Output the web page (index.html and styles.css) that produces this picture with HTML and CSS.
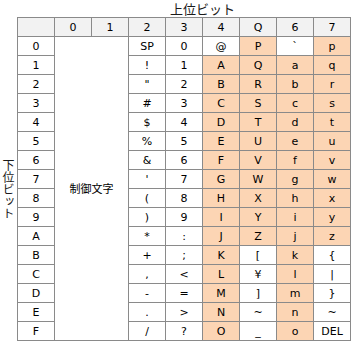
FILE: index.html
```html
<!DOCTYPE html>
<html lang="ja">
<head>
<meta charset="utf-8">
<title>文字コード表</title>
<link rel="stylesheet" href="styles.css">
</head>
<body>
<div class="page">
  <div class="corner"></div>
  <div class="top-label">上位ビット</div>
  <div class="side-label"><span class="vtext">下位ビット</span></div>
  <div class="grid">
    <div class="c hd"></div><div class="c hd">0</div><div class="c hd">1</div><div class="c hd">2</div><div class="c hd">3</div><div class="c hd">4</div><div class="c hd">Q</div><div class="c hd">6</div><div class="c hd">7</div>

    <div class="c">0</div><div class="c ctrl">制御文字</div><div class="c">SP</div><div class="c">0</div><div class="c">@</div><div class="c o">P</div><div class="c top">`</div><div class="c o">p</div>
    <div class="c">1</div><div class="c">!</div><div class="c">1</div><div class="c o">A</div><div class="c o">Q</div><div class="c o">a</div><div class="c o">q</div>
    <div class="c">2</div><div class="c">"</div><div class="c">2</div><div class="c o">B</div><div class="c o">R</div><div class="c o">b</div><div class="c o">r</div>
    <div class="c">3</div><div class="c">#</div><div class="c">3</div><div class="c o">C</div><div class="c o">S</div><div class="c o">c</div><div class="c o">s</div>
    <div class="c">4</div><div class="c">$</div><div class="c">4</div><div class="c o">D</div><div class="c o">T</div><div class="c o">d</div><div class="c o">t</div>
    <div class="c">5</div><div class="c">%</div><div class="c">5</div><div class="c o">E</div><div class="c o">U</div><div class="c o">e</div><div class="c o">u</div>
    <div class="c">6</div><div class="c">&amp;</div><div class="c">6</div><div class="c o">F</div><div class="c o">V</div><div class="c o">f</div><div class="c o">v</div>
    <div class="c">7</div><div class="c">'</div><div class="c">7</div><div class="c o">G</div><div class="c o">W</div><div class="c o">g</div><div class="c o">w</div>
    <div class="c">8</div><div class="c">(</div><div class="c">8</div><div class="c o">H</div><div class="c o">X</div><div class="c o">h</div><div class="c o">x</div>
    <div class="c">9</div><div class="c">)</div><div class="c">9</div><div class="c o">I</div><div class="c o">Y</div><div class="c o">i</div><div class="c o">y</div>
    <div class="c">A</div><div class="c">*</div><div class="c">:</div><div class="c o">J</div><div class="c o">Z</div><div class="c o">j</div><div class="c o">z</div>
    <div class="c">B</div><div class="c">+</div><div class="c">;</div><div class="c o">K</div><div class="c">[</div><div class="c o">k</div><div class="c">{</div>
    <div class="c">C</div><div class="c">,</div><div class="c">&lt;</div><div class="c o">L</div><div class="c">¥</div><div class="c o">l</div><div class="c">|</div>
    <div class="c">D</div><div class="c">-</div><div class="c">=</div><div class="c o">M</div><div class="c">]</div><div class="c o">m</div><div class="c">}</div>
    <div class="c">E</div><div class="c">.</div><div class="c">&gt;</div><div class="c o">N</div><div class="c">~</div><div class="c o">n</div><div class="c">~</div>
    <div class="c">F</div><div class="c">/</div><div class="c">?</div><div class="c o">O</div><div class="c">_</div><div class="c o">o</div><div class="c">DEL</div>
  </div>
</div>
</body>
</html>
```

FILE: styles.css
```css
html, body {
  margin: 0;
  padding: 0;
  background: #ffffff;
}

.page {
  display: grid;
  grid-template-columns: 17px 334px;
  grid-template-rows: 17px 324px;
  font-family: "DejaVu Sans", "Noto Sans CJK JP", sans-serif;
  color: #000000;
}

.top-label {
  font-family: "Noto Sans CJK JP", sans-serif;
  font-size: 13px;
  line-height: 17px;
  padding-left: 37px;
  text-align: center;
  color: #1a1a1a;
}

.side-label {
  display: flex;
  justify-content: center;
  align-items: center;
  padding-top: 19px;
}

.vtext {
  writing-mode: vertical-rl;
  text-orientation: upright;
  font-family: "Noto Sans CJK JP", sans-serif;
  font-size: 12px;
  line-height: 15px;
  color: #1a1a1a;
}

.grid {
  display: grid;
  grid-template-columns: repeat(9, 36px);
  grid-auto-rows: 18px;
  gap: 1px;
  padding: 1px;
  background: #8a8a8a;
  width: 332px;
}

.c {
  background: #ffffff;
  font-size: 11px;
  line-height: 19px;
  text-align: center;
  white-space: nowrap;
  overflow: hidden;
}

.hd {
  background: #f2f2f2;
}

.o {
  background: #fcd5b4;
}

.ctrl {
  grid-column: 2 / 4;
  grid-row: 2 / 18;
  display: flex;
  align-items: center;
  justify-content: center;
  font-family: "Noto Sans CJK JP", sans-serif;
  font-size: 11px;
}
```
